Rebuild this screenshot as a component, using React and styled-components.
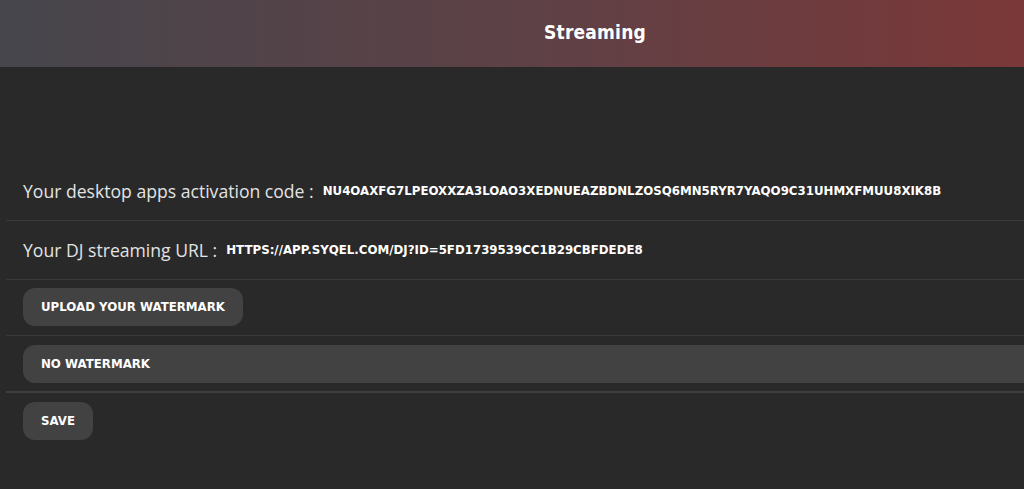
import React from "react";
import styled, { createGlobalStyle } from "styled-components";

const Global = createGlobalStyle`
  html, body { margin: 0; padding: 0; background: #292929; overflow: hidden; }
  body { font-family: "Open Sans", "DejaVu Sans", sans-serif; }
`;

const Page = styled.div`
  width: 1188px;
  min-height: 489px;
  background: #292929;
`;

const Header = styled.header`
  height: 67px;
  display: flex;
  align-items: center;
  justify-content: center;
  background: linear-gradient(90deg, #46464c 0%, #5e4146 45%, #7b3838 86%, #853333 100%);
`;

const Title = styled.h1`
  margin: 0 0 4px 2px;
  font-family: "DejaVu Sans Condensed", "DejaVu Sans", sans-serif;
  font-weight: 700;
  font-size: 19px;
  color: #ffffff;
  letter-spacing: 0.2px;
`;

const Content = styled.main`
  padding-top: 95px;
  margin-left: 6px;
`;

const InfoRow = styled.div`
  display: flex;
  align-items: center;
  gap: 9px;
  padding-left: 17px;
  height: ${(p) => p.$h}px;
  border-bottom: 1px solid #3a3a3a;
`;

const ActionRow = styled.div`
  display: flex;
  align-items: center;
  padding: ${(p) => p.$pad};
  padding-left: 17px;
  border-bottom: ${(p) => (p.$last ? "none" : p.$thick ? "2px solid #3e3e3e" : "1px solid #3a3a3a")};
`;

const Label = styled.span`
  font-size: 17.6px;
  color: #e3e3e3;
`;

const Value = styled.span`
  font-family: "DejaVu Sans", sans-serif;
  font-weight: 700;
  font-size: 11.8px;
  color: #ffffff;
  text-transform: uppercase;
`;

const Button = styled.button`
  height: 38px;
  border: none;
  border-radius: 12px;
  background: #424242;
  color: #ffffff;
  font-family: "DejaVu Sans", sans-serif;
  font-weight: 700;
  font-size: 11.8px;
  text-transform: uppercase;
  padding: 0 18px;
  text-align: left;
  cursor: pointer;
  flex: ${(p) => (p.$wide ? "1" : "0 0 auto")};
`;

export default function App() {
  return (
    <Page>
      <Global />
      <Header>
        <Title>Streaming</Title>
      </Header>
      <Content>
        <InfoRow $h={58}>
          <Label>Your desktop apps activation code :</Label>
          <Value>NU4OAXFG7LPEOXXZA3LOAO3XEDNUEAZBDNLZOSQ6MN5RYR7YAQO9C31UHMXFMUU8XIK8B</Value>
        </InfoRow>
        <InfoRow $h={58}>
          <Label>Your DJ streaming URL :</Label>
          <Value>HTTPS://APP.SYQEL.COM/DJ?ID=5FD1739539CC1B29CBFDEDE8</Value>
        </InfoRow>
        <ActionRow $pad="8px 0 9px">
          <Button>Upload your watermark</Button>
        </ActionRow>
        <ActionRow $pad="9px 0 8px" $thick>
          <Button $wide>No watermark</Button>
        </ActionRow>
        <ActionRow $pad="9px 0 9px" $last>
          <Button>Save</Button>
        </ActionRow>
      </Content>
    </Page>
  );
}
